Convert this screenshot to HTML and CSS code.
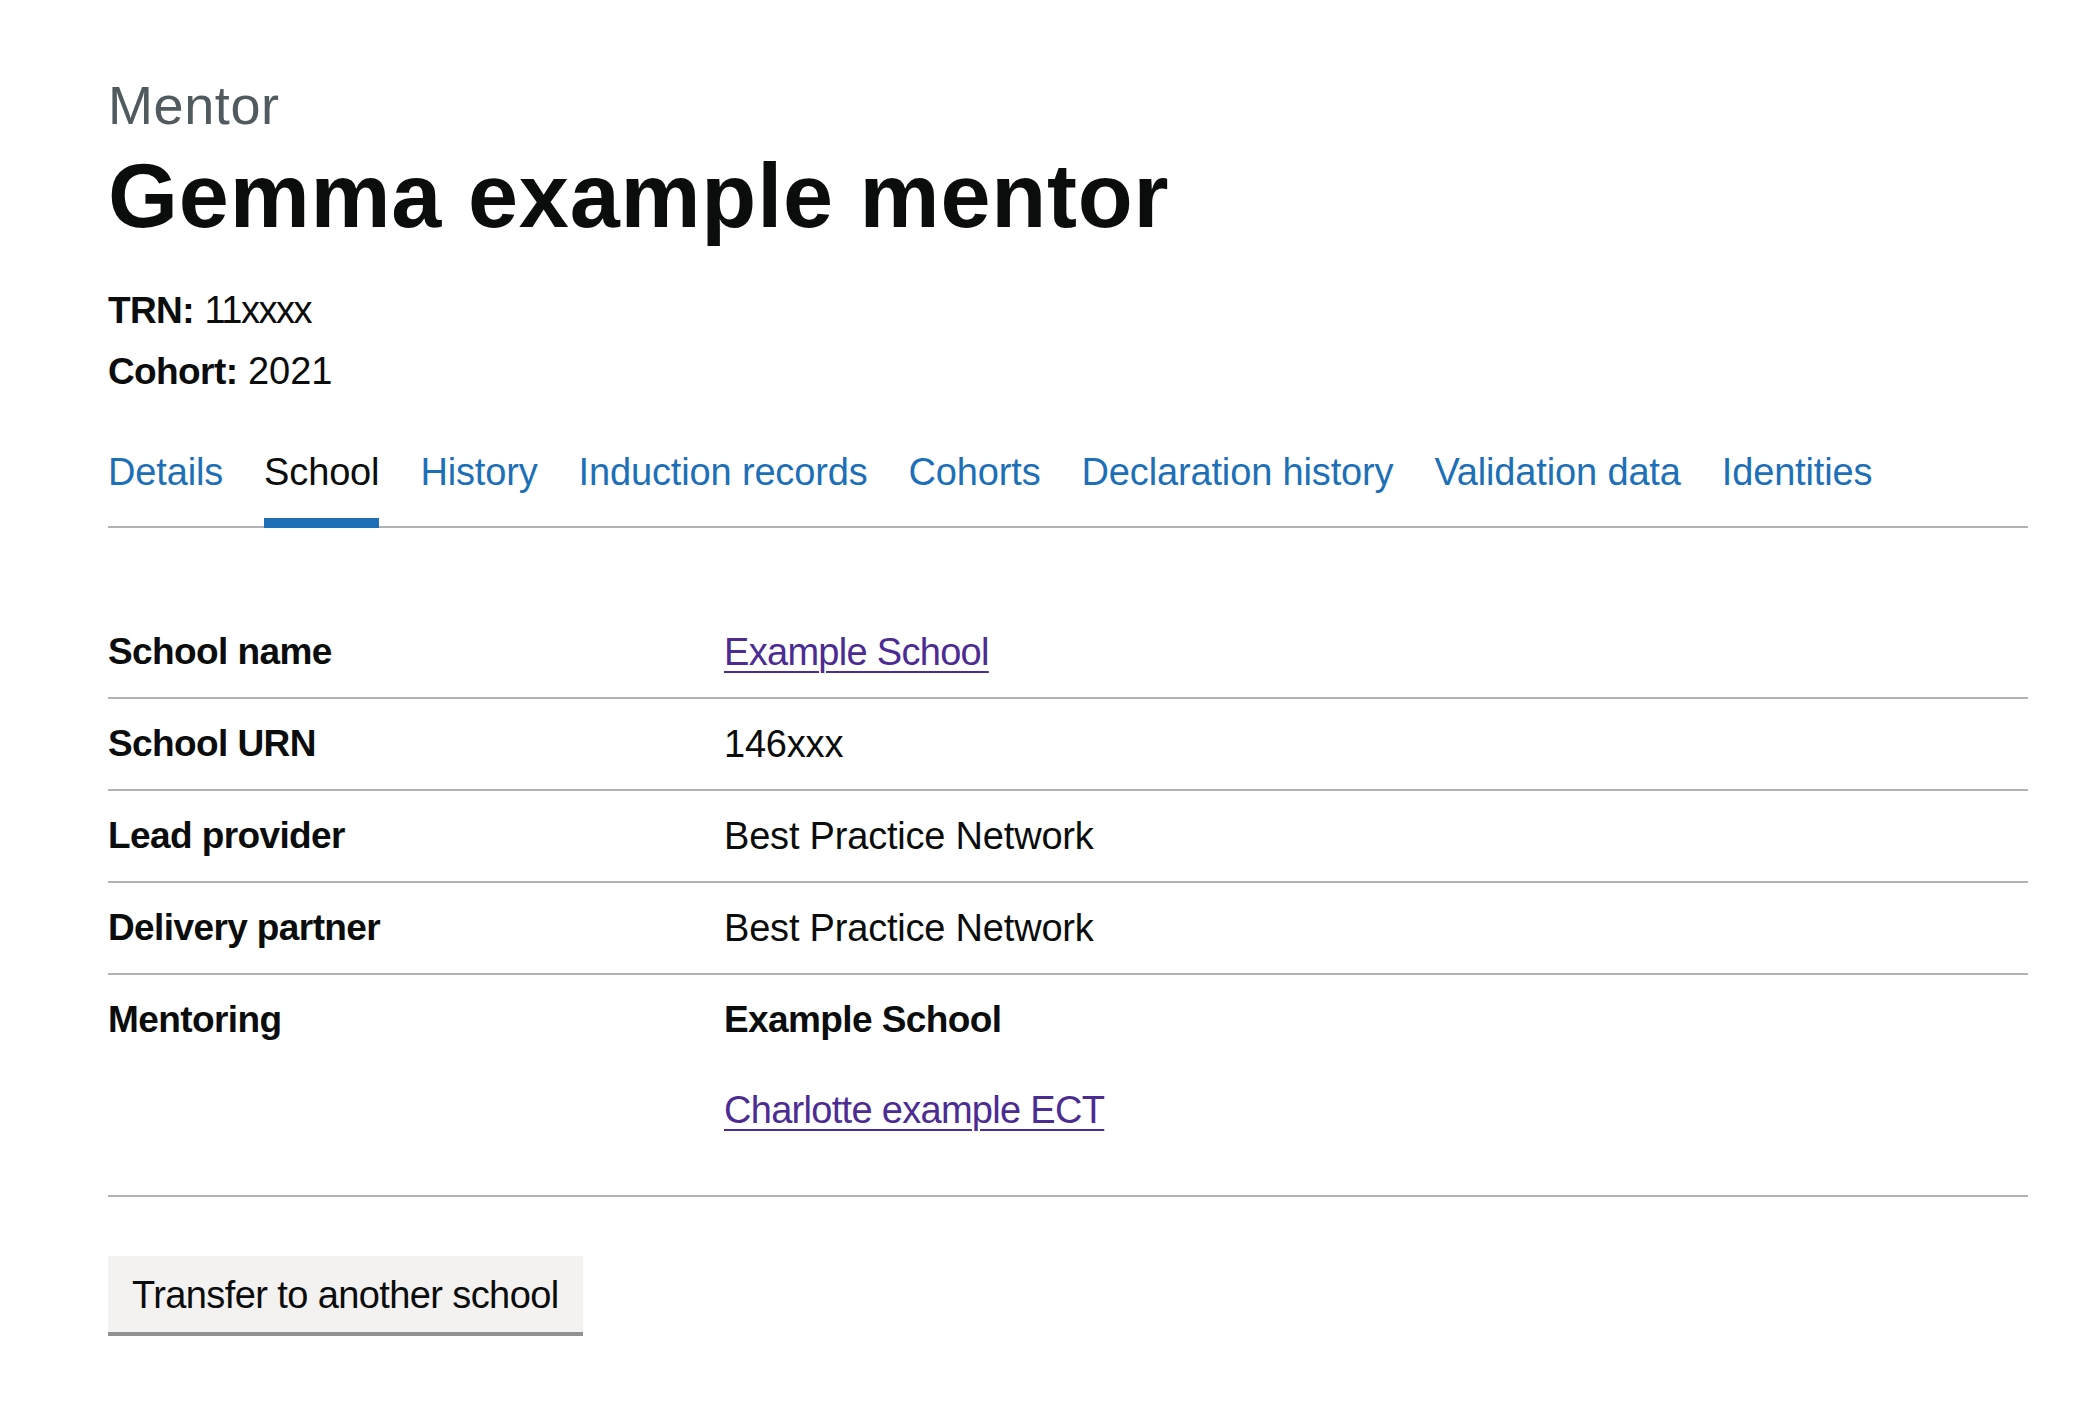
FILE: index.html
```html
<!DOCTYPE html>
<html lang="en">
<head>
<meta charset="utf-8">
<title>Gemma example mentor</title>
<link rel="stylesheet" href="styles.css">
</head>
<body>
<main class="page">
  <span class="caption">Mentor</span>
  <h1 class="title">Gemma example mentor</h1>
  <p class="meta"><strong class="meta-key">TRN:</strong> <span class="meta-narrow">11xxxx</span></p>
  <p class="meta"><strong class="meta-key">Cohort:</strong> 2021</p>

  <nav class="subnav" aria-label="Participant sections">
    <ul class="subnav-list">
      <li><a class="subnav-link" href="#">Details</a></li>
      <li><a class="subnav-link is-current" href="#" aria-current="page">School</a></li>
      <li><a class="subnav-link" href="#">History</a></li>
      <li><a class="subnav-link" href="#">Induction records</a></li>
      <li><a class="subnav-link" href="#">Cohorts</a></li>
      <li><a class="subnav-link" href="#">Declaration history</a></li>
      <li><a class="subnav-link" href="#">Validation data</a></li>
      <li><a class="subnav-link" href="#">Identities</a></li>
    </ul>
  </nav>

  <dl class="summary">
    <div class="summary-row">
      <dt class="summary-key">School name</dt>
      <dd class="summary-value"><a class="visited-link" href="#">Example School</a></dd>
    </div>
    <div class="summary-row">
      <dt class="summary-key">School URN</dt>
      <dd class="summary-value">146xxx</dd>
    </div>
    <div class="summary-row">
      <dt class="summary-key">Lead provider</dt>
      <dd class="summary-value">Best Practice Network</dd>
    </div>
    <div class="summary-row">
      <dt class="summary-key">Delivery partner</dt>
      <dd class="summary-value">Best Practice Network</dd>
    </div>
    <div class="summary-row">
      <dt class="summary-key">Mentoring</dt>
      <dd class="summary-value">
        <p class="value-para value-bold">Example School</p>
        <p class="value-para"><a class="visited-link" href="#">Charlotte example ECT</a></p>
      </dd>
    </div>
  </dl>

  <button class="button" type="button">Transfer to another school</button>
</main>
</body>
</html>
```

FILE: styles.css
```css
* {
  box-sizing: border-box;
}

html, body {
  margin: 0;
  padding: 0;
  background: #ffffff;
}

body {
  font-family: "Liberation Sans", Arial, sans-serif;
  color: #0b0c0c;
}

.page {
  width: 1920px;
  margin-left: 108px;
  padding-top: 75px;
  padding-bottom: 60px;
}

.caption {
  display: block;
  font-size: 54px;
  line-height: 60px;
  letter-spacing: 0.6px;
  color: #505a5f;
  margin-bottom: 11px;
}

.title {
  margin: 0 0 39px;
  font-size: 90px;
  line-height: 100px;
  font-weight: 700;
  letter-spacing: 0.8px;
}

.meta {
  margin: 0 0 10px;
  font-size: 38px;
  line-height: 50px;
}

.meta-key {
  font-size: 37px;
  letter-spacing: -0.6px;
}

.meta-narrow {
  letter-spacing: -1.5px;
}

.subnav {
  margin-top: 50px;
  border-bottom: 2px solid #b1b4b6;
}

.subnav-list {
  list-style: none;
  margin: 0 0 -2px;
  padding: 0;
  display: flex;
  gap: 41px;
}

.subnav-link {
  display: block;
  font-size: 38px;
  line-height: 50px;
  letter-spacing: -0.15px;
  padding-bottom: 31px;
  color: #1d70b8;
  text-decoration: none;
}

.subnav-link.is-current {
  color: #0b0c0c;
  box-shadow: inset 0 -10px 0 #1d70b8;
}

.summary {
  margin: 79px 0 59px;
  padding: 0;
}

.summary-row {
  display: flex;
  border-bottom: 2px solid #b1b4b6;
}

.summary-key,
.summary-value {
  margin: 0;
  padding-top: 20px;
  padding-bottom: 20px;
  line-height: 50px;
}

.summary-key {
  flex: 0 0 616px;
  padding-right: 40px;
  font-size: 37px;
  font-weight: 700;
  letter-spacing: -0.6px;
}

.summary-value {
  flex: 1 1 auto;
  font-size: 38px;
  letter-spacing: -0.2px;
}

.value-para {
  margin: 0 0 40px;
}

.value-bold {
  font-size: 37px;
  font-weight: 700;
  letter-spacing: -0.6px;
}

.visited-link {
  color: #4c2c92;
  letter-spacing: -0.7px;
  text-decoration: underline;
  text-decoration-thickness: 2px;
  text-underline-offset: 0.16em;
}

.button {
  display: inline-block;
  margin: 0;
  padding: 16px 20px 14px;
  border: 4px solid transparent;
  border-radius: 0;
  background: #f3f2f1;
  box-shadow: 0 4px 0 #929191;
  font-family: "Liberation Sans", Arial, sans-serif;
  font-size: 38px;
  line-height: 38px;
  letter-spacing: -0.6px;
  color: #0b0c0c;
  cursor: pointer;
}
```
